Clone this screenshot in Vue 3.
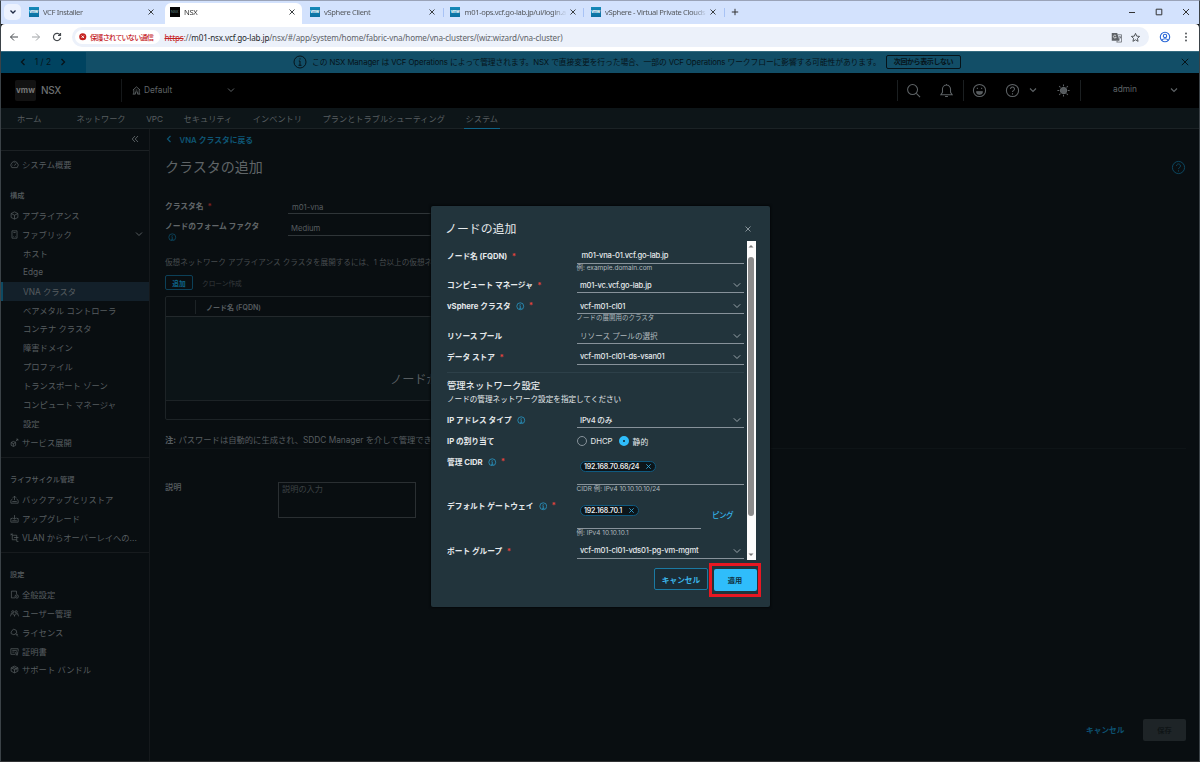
<script setup>
import { ref } from 'vue'

const icons = {
  gauge: 'M3.2 13.5a6.5 6.5 0 1 1 9.6 0zM8 10l3-4M4 9h1M8 4v1',
  cube: 'M8 1.5l6 3v7l-6 3-6-3v-7zM2 4.5l6 3 6-3M8 7.500v7',
  host: 'M3.500 1.500h9v13h-9zM6 4.500h4M6 11.500h1M9 11.500h1',
  deploy: 'M6 6l4 2v5l-4 2-4-2V8zM2 8l4 2 4-2M6 10v5M10 6l4-4M11 2h3v3',
  backup: 'M4.500 7L1.500 9.500v5h13v-5L11.500 7M4 11.500h8M8 9V2M5 5l3-3 3 3',
  upgrade: 'M4.500 8h-3v6.500h13V8h-3M4 12h8M8 2v7M5 6.500l3 3 3-3',
  vlan: 'M4 4h8v8H4zM1 2h3v2M12 12v3h3M1 4l3-3M7 8h8',
  general: 'M9 14H2.500V2h9v5M9 11.500a3 3 0 1 0 6 0a3 3 0 1 0-6 0M12 10v3',
  users: 'M3 5a2 2 0 1 0 4 0a2 2 0 1 0-4 0M9 5a2 2 0 1 0 4 0a2 2 0 1 0-4 0M1 13c0-6 7-6 7 0c0-6 7-6 7 0M1 9l2-1M15 9l-2-1',
  license: 'M2 7l4-5 5 2 1 5-5 3-5-2zM10 10l4 5M12 12l2-1',
  cert: 'M9 13H1.500V3h13v5M4 6h8M4 9h4M10 10.500a2 2 0 1 0 4 0a2 2 0 1 0-4 0M11 12v3M13 12v3',
  bundle: 'M2 5l6-3 6 3v6l-6 3-6-3zM2 5l6 3 6-3M8 8v6M5 3.500l6 3v3',
}

const tabs = [
  { title: 'VCF Installer', logo: 'vmw' },
  { title: 'NSX', logo: 'NSX', active: true },
  { title: 'vSphere Client', logo: 'vmw' },
  { title: 'm01-ops.vcf.go-lab.jp/ui/login.a', logo: 'vmw' },
  { title: 'vSphere - Virtual Private Clouds', logo: 'vmw' },
]

const navItems = ['ホーム', 'ネットワーク', 'VPC', 'セキュリティ', 'インベントリ', 'プランとトラブルシューティング', 'システム']

const sidebar = [
  {
    title: '構成',
    items: [
      { label: 'アプライアンス', icon: 'cube' },
      { label: 'ファブリック', icon: 'host', open: true },
      { label: 'ホスト' },
      { label: 'Edge' },
      { label: 'VNA クラスタ', active: true },
      { label: 'ベアメタル コントローラ' },
      { label: 'コンテナ クラスタ' },
      { label: '障害ドメイン' },
      { label: 'プロファイル' },
      { label: 'トランスポート ゾーン' },
      { label: 'コンピュート マネージャ' },
      { label: '設定' },
      { label: 'サービス展開', icon: 'deploy' },
    ],
  },
  {
    title: 'ライフサイクル管理',
    items: [
      { label: 'バックアップとリストア', icon: 'backup' },
      { label: 'アップグレード', icon: 'upgrade' },
      { label: 'VLAN からオーバーレイへの...', icon: 'vlan' },
    ],
  },
  {
    title: '設定',
    items: [
      { label: '全般設定', icon: 'general' },
      { label: 'ユーザー管理', icon: 'users' },
      { label: 'ライセンス', icon: 'license' },
      { label: '証明書', icon: 'cert' },
      { label: 'サポート バンドル', icon: 'bundle' },
    ],
  },
]

const nodeFields = [
  { label: 'ノード名 (FQDN)', required: true, type: 'input', value: 'm01-vna-01.vcf.go-lab.jp', help: '例: example.domain.com' },
  { label: 'コンピュート マネージャ', required: true, type: 'select', value: 'm01-vc.vcf.go-lab.jp' },
  { label: 'vSphere クラスタ', info: true, required: true, type: 'select', value: 'vcf-m01-cl01', help: 'ノードの展開用のクラスタ' },
  { label: 'リソース プール', type: 'select', value: 'リソース プールの選択', placeholder: true },
  { label: 'データ ストア', required: true, type: 'select', value: 'vcf-m01-cl01-ds-vsan01' },
]

const networkFields = [
  { label: 'IP アドレス タイプ', info: true, type: 'select', value: 'IPv4 のみ' },
  { label: 'IP の割り当て', type: 'radio' },
  { label: '管理 CIDR', info: true, required: true, type: 'tag', value: '192.168.70.68/24', help: 'CIDR 例: IPv4 10.10.10.10/24' },
  { label: 'デフォルト ゲートウェイ', info: true, required: true, type: 'tag', value: '192.168.70.1', help: '例: IPv4 10.10.10.1', ping: true },
  { label: 'ポート グループ', required: true, type: 'select', value: 'vcf-m01-cl01-vds01-pg-vm-mgmt' },
]

const assignment = ref('static')
</script>

<template>
  <div class="window">
    <div class="tabstrip">
      <div class="tab-search">
        <svg viewBox="0 0 8 8"><path d="M1.500 2.500L4 5l2.500-2.500" /></svg>
      </div>
      <div v-for="(tab, i) in tabs" :key="tab.title" class="tab" :class="{ active: tab.active, divided: i > 2 }">
        <span class="favicon" :class="{ dark: tab.active }">{{ tab.logo }}</span>
        <span class="tab-title">{{ tab.title }}</span>
        <svg class="tab-close" viewBox="0 0 8 8"><path d="M1.500 1.500l5 5M6.500 1.500l-5 5" /></svg>
      </div>
      <svg class="tab-new" viewBox="0 0 8 8"><path d="M4 .8v6.400M.8 4h6.400" /></svg>
      <div class="window-buttons">
        <svg viewBox="0 0 8 8"><path d="M1 4.500h6" /></svg>
        <svg viewBox="0 0 8 8"><path d="M1.200 1.200h5.600v5.600H1.200z" /></svg>
        <svg viewBox="0 0 8 8"><path d="M1 1l6 6M7 1L1 7" /></svg>
      </div>
    </div>

    <div class="toolbar">
      <svg class="tool back" viewBox="0 0 10 10"><path d="M9 5H1.500M5 1.500L1.500 5 5 8.500" /></svg>
      <svg class="tool forward" viewBox="0 0 10 10"><path d="M1 5h7.500M5 1.500L8.500 5 5 8.500" /></svg>
      <svg class="tool reload" viewBox="0 0 10 10"><path d="M8.200 3.200A3.600 3.600 0 1 0 8.600 5.600M8.500 1v2.500H6" /></svg>
      <div class="omnibox">
        <span class="unsafe">
          <svg viewBox="0 0 8 8"><circle cx="4" cy="4" r="3.800" fill="#c5221f" stroke="none" /><path d="M2.700 2.700l2.600 2.600M5.300 2.700L2.700 5.300" stroke="#fff" /></svg>
          <span>保護されていない通信</span>
        </span>
        <span class="url"><s>https</s>://<b>m01-nsx.vcf.go-lab.jp</b>/nsx/#/app/system/home/fabric-vna/home/vna-clusters/(wiz:wizard/vna-cluster)</span>
        <svg class="translate" viewBox="0 0 12 12">
          <path d="M.8 1h6l2.500 8.500H.8z" fill="#5f6368" />
          <path d="M7.500 3h4v8H6l1.500-1.500M8.200 5.500h3M9.700 4.500v1M10.700 5.500L8.800 8.500" stroke="#5f6368" stroke-width=".8" fill="none" />
          <path d="M5.500 4a1.600 1.600 0 1 0 .2 1.700H4.300" stroke="#fff" stroke-width=".7" fill="none" />
        </svg>
        <svg class="star" viewBox="0 0 12 12"><path d="M6 1.500l1.300 3 3.200.3L8.100 7l.7 3.200L6 8.500l-2.800 1.700.7-3.200-2.400-2.200 3.200-.3z" /></svg>
      </div>
      <svg class="profile" viewBox="0 0 12 12"><circle cx="6" cy="6" r="4.700" /><circle cx="6" cy="5" r="1.700" /><path d="M2.800 9.300c1.500-2 4.900-2 6.400 0" /></svg>
      <svg class="kebab" viewBox="0 0 4 12"><circle cx="2" cy="2.500" r=".9" /><circle cx="2" cy="6" r=".9" /><circle cx="2" cy="9.500" r=".9" /></svg>
    </div>

    <div class="banner">
      <div class="pager">
        <svg viewBox="0 0 8 8"><path d="M5.500 1L2.500 4l3 3" /></svg>
        <span>1 / 2</span>
        <svg viewBox="0 0 8 8"><path d="M2.500 1l3 3-3 3" /></svg>
      </div>
      <svg class="banner-info" viewBox="0 0 14 14"><circle cx="7" cy="7" r="6" /><path d="M7 6v4.300M5.800 6H7M5.500 10.300h3M7 3.300v1.200" /></svg>
      <span class="banner-text">この NSX Manager は VCF Operations によって管理されます。NSX で直接変更を行った場合、一部の VCF Operations ワークフローに影響する可能性があります。</span>
      <button class="banner-button">次回から表示しない</button>
      <svg class="banner-close" viewBox="0 0 8 8"><path d="M.8.8l6.400 6.400M7.200.8L.8 7.200" /></svg>
    </div>

    <header class="header">
      <span class="brand-logo">vmw</span>
      <span class="brand">NSX</span>
      <div class="scope">
        <svg class="scope-icon" viewBox="0 0 10 10"><path d="M1 4.500L5 1l4 3.500M2 4v5M8 4v5M.8 9h3V6.500h2.400V9h3M4 4.500h2" /></svg>
        <span>Default</span>
        <svg class="chevron" viewBox="0 0 8 8"><path d="M1 2.500l3 3 3-3" /></svg>
      </div>
      <div class="actions">
        <span class="cell search"><svg viewBox="0 0 16 16"><circle cx="7" cy="7" r="5.300" /><path d="M11 11l4 4" /></svg></span>
        <span class="cell bell"><svg viewBox="0 0 16 16"><path d="M2 12.500h12L12.300 10V6.500a4.300 4.300 0 0 0-8.600 0V10zM6.500 14.500h3M8 1v1" /></svg></span>
        <span class="cell smile"><svg viewBox="0 0 16 16"><circle cx="8" cy="8" r="6.500" /><path d="M5 9.300h6a3 2.600 0 0 1-6 0z" fill="#53585b" /><path d="M5.700 5v1.500M10.300 5v1.500" /></svg></span>
        <span class="cell help"><svg viewBox="0 0 16 16"><circle cx="8" cy="8" r="6.500" /><path d="M5.900 6.300a2.100 2.100 0 1 1 3.200 1.800Q8 8.700 8 9.700M8 11v1.300" /></svg></span>
        <span class="cell small"><svg viewBox="0 0 8 8"><path d="M1 2.500l3 3 3-3" /></svg></span>
        <span class="cell sun"><svg viewBox="0 0 16 16"><circle cx="8" cy="8" r="3.300" fill="#565b5e" /><path d="M8 1.500v2M8 12.500v2M1.500 8h2M12.500 8h2M3.400 3.400l1.400 1.400M11.200 11.200l1.400 1.400M12.600 3.400l-1.400 1.400M3.400 12.600l1.400-1.400" /></svg></span>
        <span class="cell user">admin</span>
        <span class="cell small last"><svg viewBox="0 0 8 8"><path d="M1 2.500l3 3 3-3" /></svg></span>
      </div>
    </header>

    <nav class="nav">
      <a v-for="(item, i) in navItems" :key="item" :class="{ current: item === 'システム', first: i === 0 }">{{ item }}</a>
    </nav>

    <div class="body">
      <aside class="sidebar">
        <div class="collapse">
          <svg viewBox="0 0 8 8"><path d="M4 1L1.200 4 4 7M7 1L4.200 4 7 7" /></svg>
        </div>
        <div class="side-item overview">
          <svg class="side-icon" viewBox="0 0 16 16"><path :d="icons.gauge" /></svg>
          <span>システム概要</span>
        </div>
        <section v-for="group in sidebar" :key="group.title" class="side-group">
          <h4>{{ group.title }}</h4>
          <div v-for="item in group.items" :key="item.label" class="side-item" :class="{ active: item.active, child: !item.icon }">
            <svg v-if="item.icon" class="side-icon" viewBox="0 0 16 16"><path :d="icons[item.icon]" /></svg>
            <span>{{ item.label }}</span>
            <svg v-if="item.open" class="side-chevron" viewBox="0 0 8 8"><path d="M1 2.500l3 3 3-3" /></svg>
          </div>
        </section>
      </aside>

      <main class="main">
        <a class="back-link">
          <svg viewBox="0 0 8 8"><path d="M5.500 1L2.500 4l3 3" /></svg>
          VNA クラスタに戻る
        </a>
        <div class="page-head">
          <h1>クラスタの追加</h1>
          <svg class="page-help" viewBox="0 0 16 16"><circle cx="8" cy="8" r="6.500" /><path d="M5.900 6.300a2.100 2.100 0 1 1 3.200 1.800Q8 8.700 8 9.700M8 11v1.300" /></svg>
        </div>

        <div class="form-row">
          <label>クラスタ名 <i>*</i></label>
          <div class="line-input inset">m01-vna</div>
        </div>
        <div class="form-row second">
          <label>
            ノードのフォーム ファクタ
            <svg class="info" viewBox="0 0 16 16"><circle cx="8" cy="8" r="6.500" /><path d="M8 7v5M6.500 7H8M6 12h4M8 3.800v1.500" /></svg>
          </label>
          <div class="line-input">Medium</div>
        </div>

        <p class="hint">仮想ネットワーク アプライアンス クラスタを展開するには、1 台以上の仮想ネットワーク ノードを追加します</p>
        <div class="table-actions">
          <button class="add">追加</button>
          <span>クローン作成</span>
        </div>
        <div class="table">
          <div class="table-head">
            <span class="check-col"></span>
            <span>ノード名 (FQDN)</span>
          </div>
          <div class="table-body">ノードがありません</div>
          <div class="table-foot"></div>
        </div>
        <p class="note"><b>注:</b> パスワードは自動的に生成され、SDDC Manager を介して管理できます</p>

        <div class="desc">
          <label>説明</label>
          <div class="textarea">説明の入力</div>
        </div>

        <div class="page-actions">
          <a>キャンセル</a>
          <button>保存</button>
        </div>
      </main>
    </div>

    <div class="modal" role="dialog" aria-modal="true">
      <div class="modal-head">
        <h2>ノードの追加</h2>
        <svg viewBox="0 0 8 8"><path d="M1.500 1.500l5 5M6.500 1.500l-5 5" /></svg>
      </div>
      <div class="modal-scroll">
        <div class="modal-form">
          <template v-for="(fields, section) in [nodeFields, networkFields]" :key="section">
            <div v-if="section === 1" class="section">
              <h3>管理ネットワーク設定</h3>
              <p>ノードの管理ネットワーク設定を指定してください</p>
            </div>
            <div v-for="field in fields" :key="field.label" class="field">
              <label>
                <span>{{ field.label }}</span>
                <svg v-if="field.info" class="info" viewBox="0 0 16 16"><circle cx="8" cy="8" r="6.500" /><path d="M8 7v5M6.500 7H8M6 12h4M8 3.800v1.500" /></svg>
                <i v-if="field.required">*</i>
              </label>
              <div class="control-wrap">
                <div v-if="field.type === 'radio'" class="radios">
                  <span class="radio" :class="{ on: assignment === 'dhcp' }" @click="assignment = 'dhcp'"></span>
                  <span class="dhcp">DHCP</span>
                  <span class="radio" :class="{ on: assignment === 'static' }" @click="assignment = 'static'"></span>
                  <span>静的</span>
                </div>
                <div v-else class="control" :class="[field.type, { placeholder: field.placeholder, short: field.ping }]">
                  <span v-if="field.type === 'tag'" class="chip">
                    {{ field.value }}
                    <svg viewBox="0 0 8 8"><path d="M1.500 1.500l5 5M6.500 1.500l-5 5" /></svg>
                  </span>
                  <span v-else>{{ field.value }}</span>
                  <svg v-if="field.type === 'select'" class="chevron" viewBox="0 0 8 8"><path d="M.8 2.300l3.200 3.200 3.200-3.200" /></svg>
                </div>
                <a v-if="field.ping" class="ping">ピング</a>
                <div v-if="field.help" class="help-text">{{ field.help }}</div>
              </div>
            </div>
          </template>
        </div>
        <div class="scrollbar">
          <svg viewBox="0 0 8 8"><path d="M1.500 5.500h5L4 3z" /></svg>
          <div class="thumb"></div>
          <svg class="down" viewBox="0 0 8 8"><path d="M1.500 2.500h5L4 5z" /></svg>
        </div>
      </div>
      <div class="modal-actions">
        <button class="cancel">キャンセル</button>
        <div class="highlight">
          <button class="apply">適用</button>
        </div>
      </div>
    </div>
  </div>
</template>

<style>
body {
  background: #090e11;
  overflow: hidden;
}
</style>

<style scoped>
* {
  box-sizing: border-box;
}

.window {
  position: relative;
  width: 1200px;
  height: 762px;
  border-top: 1px solid #9aa3b8;
  border-left: 1px solid #3b4247;
  border-right: 1px solid #3b4247;
  border-bottom: 1px solid #303234;
  background: #090e11;
  color: #575d60;
  font-family: Inter, "Noto Sans CJK JP", sans-serif;
  font-size: 8.2px;
  overflow: hidden;
  white-space: nowrap;
  display: flex;
  flex-direction: column;
}

svg {
  fill: none;
  stroke: currentColor;
  stroke-width: 1;
  flex: none;
  display: block;
}

h1, h2, h3, h4, p {
  margin: 0;
  font-weight: 400;
}

button {
  font: inherit;
  padding: 0;
  margin: 0;
  flex: none;
}

i {
  font-style: normal;
  color: #e0433c;
}

/* browser chrome */
.tabstrip {
  height: 23px;
  flex: none;
  background: #d3e2fd;
  display: flex;
  align-items: center;
  padding-left: 3px;
  padding-bottom: 1px;
  font-family: "Noto Sans", "Noto Sans CJK JP", sans-serif;
  font-size: 7.6px;
  color: #55585d;
}

.tab-search {
  width: 17px;
  height: 16px;
  border-radius: 5px;
  background: #ecf2fe;
  display: grid;
  place-items: center;
  margin-right: 3px;
}

.tab-search svg {
  width: 8px;
  height: 8px;
  stroke: #1f2a44;
  stroke-width: 1.3;
}

.tab {
  width: 140.500px;
  height: 22px;
  display: flex;
  align-items: center;
  padding: 0 9.500px 0 4.500px;
  position: relative;
}

.tab.divided::before,
.tab:nth-child(6)::after {
  content: "";
  position: absolute;
  left: -3px;
  top: 7px;
  width: 1px;
  height: 9px;
  background: #a8c3f5;
}

.tab:nth-child(6)::after {
  left: auto;
  right: 1.500px;
}

.tab.active {
  height: 21px;
  align-self: flex-end;
  background: #fff;
  border-radius: 6px 6px 0 0;
  color: #333;
  width: 137px;
  margin-right: 3.500px;
  margin-bottom: -1px;
  padding: 0 5.500px 3px 5px;
}

.favicon {
  width: 10px;
  height: 10px;
  flex: none;
  background: linear-gradient(#1589b8, #0b6fa0);
  color: #fff;
  font: 700 4px/10px Inter, sans-serif;
  letter-spacing: -0.3px;
  text-align: center;
  margin-right: 4.500px;
}

.favicon.dark {
  background: #050505;
  color: #5c8080;
  font-weight: 400;
}

.tab-title {
  flex: 1;
  letter-spacing: -0.36px;
  mask-image: linear-gradient(90deg, #000 88px, transparent 102px);
}

.tab-close {
  width: 8px;
  height: 8px;
  margin-left: 3px;
  stroke: #3c4043;
}

.tab-new {
  width: 8px;
  height: 8px;
  margin-left: 4px;
  stroke: #333;
}

.window-buttons {
  margin-left: auto;
  padding-right: 9.500px;
  display: flex;
  gap: 19px;
}

.window-buttons svg {
  width: 8px;
  height: 8px;
  stroke: #333;
}

.toolbar {
  height: 27px;
  flex: none;
  background: #fff;
  display: flex;
  align-items: center;
  padding-left: 8px;
  padding-bottom: 1px;
  border-radius: 4px 4px 0 0;
  font-family: "Noto Sans", "Noto Sans CJK JP", sans-serif;
}

.tool {
  width: 10px;
  height: 10px;
  stroke: #45494d;
}

.forward {
  margin-left: 11.500px;
  stroke: #a0a3a6;
}

.reload {
  margin-left: 11.500px;
  stroke-width: 1.200;
}

.omnibox {
  width: 1077px;
  height: 20px;
  margin-left: 10px;
  border-radius: 10px;
  background: #ecf1fa;
  display: flex;
  align-items: center;
  padding-left: 3px;
}

.unsafe {
  width: 85px;
  height: 14px;
  border-radius: 7px;
  background: #fff;
  display: flex;
  align-items: center;
  padding-left: 4px;
  color: #c5221f;
}

.unsafe span {
  font-size: 7.2px;
  font-weight: 500;
  letter-spacing: -0.85px;
}

.unsafe svg {
  width: 7.500px;
  height: 7.500px;
  margin-right: 3.500px;
}

.url {
  margin-left: 4.500px;
  font-size: 8.1px;
  letter-spacing: -0.14px;
  color: #5f6368;
}

.url s {
  color: #c5221f;
}

.url b {
  font-weight: 400;
  color: #25282b;
}

.translate {
  width: 11px;
  height: 11px;
  margin-left: auto;
  stroke: none;
}

.star {
  width: 11px;
  height: 11px;
  margin: 0 8.500px 0 8px;
  stroke: #45494d;
}

.profile {
  width: 12px;
  height: 12px;
  margin-left: 9.500px;
  stroke: #2b68d6;
  stroke-width: 1.1;
}

.kebab {
  width: 4px;
  height: 12px;
  margin-left: 13.500px;
  fill: #45494d;
  stroke: none;
}

/* notification banner */
.banner {
  height: 22px;
  flex: none;
  background: #124e67;
  border-top: 1px solid #356b80;
  color: #061319;
  display: flex;
  align-items: center;
  padding-bottom: 1px;
}

.pager {
  width: 85px;
  height: 21px;
  margin-bottom: -1px;
  padding-bottom: 1px;
  background: #004360;
  display: flex;
  align-items: center;
  padding-left: 18px;
  font-size: 8.5px;
}

.pager svg {
  width: 8px;
  height: 8px;
  stroke-width: 1.3;
}

.pager span {
  width: 32px;
  text-align: center;
}

.banner-info {
  width: 14px;
  height: 14px;
  margin: 0 5px 0 207px;
}

.banner-text {
  width: 574px;
  font-size: 7.8px;
  letter-spacing: -0.1px;
  padding-bottom: 1px;
}

.banner-button {
  width: 75px;
  height: 14px;
  border: 1px solid #061319;
  border-radius: 2px;
  background: none;
  color: inherit;
  font-size: 7px;
  font-weight: 700;
  letter-spacing: -0.4px;
  line-height: 12px;
}

.banner-close {
  width: 8px;
  height: 8px;
  margin: 0 10px 0 auto;
}

/* product header */
.header {
  height: 35px;
  flex: none;
  background: #000;
  display: flex;
  align-items: center;
  padding-left: 14px;
  padding-bottom: 1px;
  color: #5f6467;
}

.brand-logo {
  width: 21px;
  height: 21px;
  border-radius: 2px;
  background: #121212;
  color: #777;
  font-size: 8px;
  font-weight: 700;
  line-height: 20px;
  text-align: center;
}

.brand {
  width: 85px;
  padding-left: 5px;
  font-size: 10px;
  font-weight: 500;
  letter-spacing: -0.3px;
  color: #6c7072;
}

.scope {
  width: 125px;
  height: 23px;
  padding-left: 10px;
  border-left: 1px solid #15181a;
  display: flex;
  align-items: center;
  font-size: 8.3px;
}

.scope-icon {
  width: 9px;
  height: 9px;
  margin-right: 3px;
}

.scope .chevron {
  width: 8px;
  height: 8px;
  margin-left: auto;
  margin-right: 11.500px;
}

.actions {
  margin-left: auto;
  display: flex;
  height: 21px;
}

.cell {
  width: 33px;
  display: grid;
  place-items: center;
}

.cell svg {
  width: 15px;
  height: 15px;
  stroke-width: 1.100;
}

.cell.small {
  width: 8px;
}

.cell.small svg {
  width: 8px;
  height: 8px;
}

.cell.search {
  border-left: 1px solid #1b1f21;
  padding-right: 2px;
}

.cell.smile {
  border-left: 1px solid #1b1f21;
  padding-right: 2px;
}

.cell.sun {
  width: 44px;
  padding-left: 9px;
  border-right: 1px solid #1b1f21;
}

.cell.user {
  width: 88px;
  font-size: 8.3px;
  padding-bottom: 2px;
}

.cell.small.last {
  width: 30px;
  padding-right: 20px;
  padding-bottom: 1px;
}

.nav {
  height: 21px;
  flex: none;
  background: #0d1518;
  border-bottom: 1px solid #1b2225;
  display: flex;
  gap: 16.600px;
  padding-left: 14px;
}

.nav a {
  height: 21px;
  line-height: 22px;
  padding: 0 2px;
  font-size: 8.2px;
}

.nav a.first {
  margin-right: 14.500px;
}

.nav a.current {
  border-bottom: 1px solid #0f6285;
}

/* body */
.body {
  flex: 1;
  min-height: 0;
  display: flex;
}

.sidebar {
  width: 149px;
  border-right: 1px solid #15191c;
  flex: none;
}

.collapse {
  height: 22px;
  border-bottom: 1px solid #1c2124;
  display: flex;
  justify-content: flex-end;
  padding: 6px 10px 0 0;
}

.collapse svg {
  width: 8px;
  height: 8px;
}

.side-item {
  height: 18.900px;
  display: flex;
  align-items: center;
  padding: 0 0 1.500px 9px;
  font-size: 8.3px;
}

.side-item.overview {
  margin-top: 5px;
  padding-bottom: 2.500px;
}

.side-item.child {
  padding-left: 22px;
}

.side-item.active {
  background: #13202a;
  border-left: 2px solid #0d4a63;
  padding-left: 20px;
}

.side-icon {
  width: 9px;
  height: 9px;
  margin-right: 3px;
  margin-top: 1px;
  stroke-width: 1.300;
}

.side-chevron {
  width: 8px;
  height: 8px;
  margin: 0 6px 0 auto;
}

.side-group + .side-group {
  border-top: 1px solid #171b1e;
  margin-top: 5.300px;
}

.side-group h4 {
  padding: 15px 0 4.500px 9px;
  font-size: 7.2px;
  line-height: 12px;
  font-weight: 500;
}

.side-group + .side-group h4 {
  padding-top: 15.500px;
}

.main {
  flex: 1;
  min-width: 0;
  padding-left: 15px;
  padding-right: 13px;
  display: flex;
  flex-direction: column;
}

.back-link {
  display: flex;
  align-items: center;
  height: 20px;
  color: #0e5675;
  font-size: 7.8px;
  font-weight: 600;
}

.back-link svg {
  width: 8px;
  height: 8px;
  margin: 0 6.500px 0 0;
  stroke-width: 1.200;
}

.page-head {
  height: 37px;
  padding-bottom: 2px;
  display: flex;
  align-items: center;
  justify-content: space-between;
}

h1 {
  font-size: 14px;
  line-height: 20px;
  margin-top: 1px;
  color: #5f6467;
}

.page-help {
  width: 15px;
  height: 15px;
  margin-top: 2px;
  color: #0c4a63;
}

.form-row {
  height: 21px;
  margin-top: 9px;
  display: flex;
  flex: none;
}

.form-row.second {
  margin-top: 1px;
  height: 30px;
}

.form-row label {
  width: 123px;
  padding-top: 5px;
  font-size: 7.75px;
  line-height: 12px;
  font-weight: 700;
  color: #62676a;
}

.form-row i {
  color: #7a2220;
  margin-left: 2px;
}

.form-row.second label {
  padding-top: 2.500px;
}

.info {
  width: 8.500px;
  height: 8.500px;
  color: #0c4f6c;
  stroke-width: 1.400;
}

.form-row .info {
  margin: 1px 0 0 3px;
}

.line-input {
  width: 300px;
  height: 19px;
  border-bottom: 1px solid #2f3538;
  padding-left: 3px;
  line-height: 24px;
  font-size: 7.7px;
}

.line-input.inset {
  padding-left: 4px;
  line-height: 25px;
}

.hint {
  margin-top: 10px;
  height: 12px;
  line-height: 12px;
  font-size: 7.6px;
  color: #474c4f;
}

.table-actions {
  display: flex;
  align-items: center;
  gap: 9px;
  margin-top: 6px;
  font-size: 6.7px;
  color: #363b3e;
}

.add {
  width: 28px;
  height: 15px;
  border: 1px solid #0c4058;
  border-radius: 2px;
  background: none;
  color: #0e6488;
  font-weight: 700;
}

.table {
  width: 600px;
  height: 124px;
  flex: none;
  margin-top: 6px;
  border: 1px solid #1d2326;
  border-radius: 2px;
  display: flex;
  flex-direction: column;
}

.table-head {
  height: 20px;
  border-bottom: 1px solid #23292c;
  display: flex;
  align-items: center;
  font-size: 7px;
  font-weight: 600;
}

.check-col {
  width: 30px;
  height: 14px;
  border-right: 1px solid #1d2326;
  margin-right: 10px;
}

.table-body {
  flex: 1;
  background: #0c1417;
  padding: 53px 0 0 224px;
  font-size: 12.200px;
}

.table-foot {
  height: 19px;
  border-top: 1px solid #1d2326;
}

.note {
  height: 29px;
  border-bottom: 1px solid #0e1417;
  line-height: 40px;
  font-size: 8.3px;
  flex: none;
}

.desc {
  display: flex;
  margin-top: 32.500px;
}

.desc label {
  width: 113px;
  line-height: 11px;
  font-weight: 500;
}

.textarea {
  width: 138px;
  height: 36px;
  border: 1px solid #2a2f32;
  padding-left: 3px;
  line-height: 12px;
  color: #3d4245;
}

.page-actions {
  margin-top: auto;
  padding-bottom: 20.500px;
  display: flex;
  justify-content: flex-end;
  align-items: center;
  gap: 18.500px;
}

.page-actions a {
  color: #0d5272;
  font-weight: 600;
  font-size: 7.7px;
}

.page-actions button {
  width: 43px;
  height: 22px;
  border: 0;
  border-radius: 2px;
  background: #1e2427;
  color: #0f1416;
  font-size: 7.2px;
  font-weight: 600;
}

/* dialog */
.modal {
  position: absolute;
  left: 430px;
  top: 205px;
  width: 338.500px;
  height: 401px;
  background: #22343c;
  border-radius: 2px;
  box-shadow: 0 0 2px 1px #05080a;
  color: #e6eaec;
}

.modal-head {
  height: 35px;
  padding: 12px 17.500px 0 14px;
  display: flex;
  justify-content: space-between;
  align-items: flex-start;
}

.modal-head h2 {
  font-size: 11.900px;
  line-height: 22px;
}

.modal-head svg {
  width: 8px;
  height: 8px;
  margin-top: 7px;
  stroke: #9fabb1;
  stroke-width: 0.8;
}

.modal-scroll {
  height: 319px;
  padding-left: 16px;
  display: flex;
  overflow: hidden;
}

.modal-form {
  width: 299.500px;
  padding-top: 4.500px;
}

.field {
  display: grid;
  grid-template-columns: 129.500px 167px;
  margin-bottom: 3px;
}

.field label {
  height: 18px;
  padding-top: 1px;
  display: flex;
  align-items: center;
  font-size: 7.7px;
  font-weight: 700;
}

.field label i {
  margin-left: 4.500px;
  padding-top: 2px;
}

.field .info {
  color: #2a9fd0;
  margin: 2px 0 0 5.500px;
}

.field .info + i {
  margin-left: 4px;
  padding-top: 0;
}

.control-wrap {
  position: relative;
}

.control {
  height: 18px;
  border-bottom: 1px solid #87929a;
  padding: 3px 3px 0 3.500px;
  display: flex;
  align-items: center;
  justify-content: space-between;
  font-size: 7.6px;
  font-weight: 500;
  letter-spacing: -0.19px;
}

.control.input {
  padding: 3px 3px 0 5px;
}

.control .chevron {
  width: 8px;
  height: 8px;
  stroke: #98a3a9;
}

.control.placeholder {
  color: #b0b9bd;
  font-weight: 400;
  letter-spacing: 0;
}

.control.tag {
  height: 33px;
  align-items: flex-start;
  padding-top: 9px;
}

.control.short {
  width: 124.500px;
}

.chip {
  height: 11px;
  border: 1px solid #105a80;
  border-radius: 6px;
  background: #0c151a;
  padding: 0 3px 0 3px;
  display: flex;
  align-items: center;
  gap: 6px;
  font-size: 7px;
  font-weight: 600;
  letter-spacing: -0.18px;
}

.chip svg {
  width: 7px;
  height: 7px;
  stroke: #36a9dc;
}

.help-text {
  height: 8.500px;
  line-height: 9.500px;
  font-size: 6.5px;
  color: #aeb8bd;
}

.ping {
  position: absolute;
  right: 10.500px;
  top: 12.500px;
  color: #35b3e8;
  font-size: 7.6px;
  font-weight: 500;
  letter-spacing: -0.6px;
}

.radios {
  height: 18px;
  padding-top: 3px;
  display: flex;
  align-items: center;
  font-size: 7.8px;
}

.radio {
  width: 10px;
  height: 10px;
  border: 1px solid #87929a;
  border-radius: 50%;
  margin-right: 4px;
}

.radio.on {
  border: 4px solid #2fbdfb;
  background: #12222b;
}

.dhcp {
  margin-right: 6px;
}

.section {
  border-top: 1px solid #2d4049;
  margin: 7px 2.500px 0 0;
  height: 38px;
  padding-top: 6.500px;
}

.section h3 {
  font-size: 9.3px;
  font-weight: 500;
  line-height: 14px;
}

.section p {
  font-size: 7.6px;
  line-height: 14px;
}

.scrollbar {
  width: 9.500px;
  background: #fcfcfc;
  display: flex;
  flex-direction: column;
  align-items: center;
}

.scrollbar svg {
  width: 8px;
  height: 8px;
  margin-top: 1px;
  fill: #777;
  stroke: none;
}

.thumb {
  width: 6px;
  height: 259px;
  margin-top: 7px;
  border-radius: 3px;
  background: #8b8b8b;
}

.scrollbar .down {
  margin: auto 0 1px;
}

.modal-actions {
  display: flex;
  align-items: flex-start;
  justify-content: flex-end;
  padding: 3.400px 8.500px 0 0;
}

.modal-actions button {
  height: 22px;
  border-radius: 2px;
  font-size: 7.7px;
  font-weight: 600;
}

.cancel {
  width: 54px;
  margin-top: 5px;
  border: 1px solid #1b7aa3;
  background: #1b2c35;
  color: #3bb6ea;
}

.highlight {
  width: 52px;
  height: 34px;
  margin-left: 1px;
  border: 3px solid #e81722;
  display: grid;
  place-items: center;
}

.highlight .apply {
  width: 43px;
  border: 0;
  background: #2fbdfb;
  color: #10303f;
  font-size: 7.2px;
}
</style>
